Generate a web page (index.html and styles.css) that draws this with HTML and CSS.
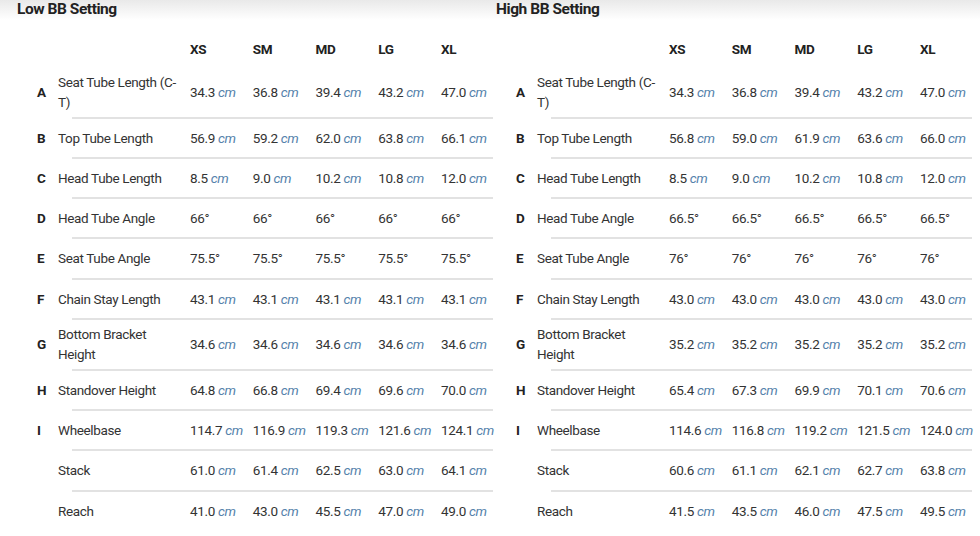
FILE: index.html
```html
<!DOCTYPE html>
<html>
<head>
<meta charset="utf-8">
<link rel="stylesheet" href="styles.css">
</head>
<body>
<div class="page">
  <section class="setting">
    <h2 class="title">Low BB Setting</h2>
    <div class="geo">
      <div class="row head"><span class="key"></span><span class="label"></span><span class="v">XS</span><span class="v">SM</span><span class="v">MD</span><span class="v">LG</span><span class="v">XL</span></div>
      <div class="row double"><span class="key">A</span><span class="label">Seat Tube Length (C-T)</span><span class="v">34.3 <i>cm</i></span><span class="v">36.8 <i>cm</i></span><span class="v">39.4 <i>cm</i></span><span class="v">43.2 <i>cm</i></span><span class="v">47.0 <i>cm</i></span></div>
      <div class="sep"></div>
      <div class="row"><span class="key">B</span><span class="label">Top Tube Length</span><span class="v">56.9 <i>cm</i></span><span class="v">59.2 <i>cm</i></span><span class="v">62.0 <i>cm</i></span><span class="v">63.8 <i>cm</i></span><span class="v">66.1 <i>cm</i></span></div>
      <div class="sep"></div>
      <div class="row"><span class="key">C</span><span class="label">Head Tube Length</span><span class="v">8.5 <i>cm</i></span><span class="v">9.0 <i>cm</i></span><span class="v">10.2 <i>cm</i></span><span class="v">10.8 <i>cm</i></span><span class="v">12.0 <i>cm</i></span></div>
      <div class="sep"></div>
      <div class="row"><span class="key">D</span><span class="label">Head Tube Angle</span><span class="v">66°</span><span class="v">66°</span><span class="v">66°</span><span class="v">66°</span><span class="v">66°</span></div>
      <div class="sep"></div>
      <div class="row"><span class="key">E</span><span class="label">Seat Tube Angle</span><span class="v">75.5°</span><span class="v">75.5°</span><span class="v">75.5°</span><span class="v">75.5°</span><span class="v">75.5°</span></div>
      <div class="sep"></div>
      <div class="row"><span class="key">F</span><span class="label">Chain Stay Length</span><span class="v">43.1 <i>cm</i></span><span class="v">43.1 <i>cm</i></span><span class="v">43.1 <i>cm</i></span><span class="v">43.1 <i>cm</i></span><span class="v">43.1 <i>cm</i></span></div>
      <div class="sep"></div>
      <div class="row double"><span class="key">G</span><span class="label">Bottom Bracket Height</span><span class="v">34.6 <i>cm</i></span><span class="v">34.6 <i>cm</i></span><span class="v">34.6 <i>cm</i></span><span class="v">34.6 <i>cm</i></span><span class="v">34.6 <i>cm</i></span></div>
      <div class="sep"></div>
      <div class="row"><span class="key">H</span><span class="label">Standover Height</span><span class="v">64.8 <i>cm</i></span><span class="v">66.8 <i>cm</i></span><span class="v">69.4 <i>cm</i></span><span class="v">69.6 <i>cm</i></span><span class="v">70.0 <i>cm</i></span></div>
      <div class="sep"></div>
      <div class="row"><span class="key">I</span><span class="label">Wheelbase</span><span class="v">114.7 <i>cm</i></span><span class="v">116.9 <i>cm</i></span><span class="v">119.3 <i>cm</i></span><span class="v">121.6 <i>cm</i></span><span class="v">124.1 <i>cm</i></span></div>
      <div class="sep"></div>
      <div class="row"><span class="key"></span><span class="label">Stack</span><span class="v">61.0 <i>cm</i></span><span class="v">61.4 <i>cm</i></span><span class="v">62.5 <i>cm</i></span><span class="v">63.0 <i>cm</i></span><span class="v">64.1 <i>cm</i></span></div>
      <div class="sep"></div>
      <div class="row"><span class="key"></span><span class="label">Reach</span><span class="v">41.0 <i>cm</i></span><span class="v">43.0 <i>cm</i></span><span class="v">45.5 <i>cm</i></span><span class="v">47.0 <i>cm</i></span><span class="v">49.0 <i>cm</i></span></div>
    </div>
  </section>
  <section class="setting">
    <h2 class="title">High BB Setting</h2>
    <div class="geo">
      <div class="row head"><span class="key"></span><span class="label"></span><span class="v">XS</span><span class="v">SM</span><span class="v">MD</span><span class="v">LG</span><span class="v">XL</span></div>
      <div class="row double"><span class="key">A</span><span class="label">Seat Tube Length (C-T)</span><span class="v">34.3 <i>cm</i></span><span class="v">36.8 <i>cm</i></span><span class="v">39.4 <i>cm</i></span><span class="v">43.2 <i>cm</i></span><span class="v">47.0 <i>cm</i></span></div>
      <div class="sep"></div>
      <div class="row"><span class="key">B</span><span class="label">Top Tube Length</span><span class="v">56.8 <i>cm</i></span><span class="v">59.0 <i>cm</i></span><span class="v">61.9 <i>cm</i></span><span class="v">63.6 <i>cm</i></span><span class="v">66.0 <i>cm</i></span></div>
      <div class="sep"></div>
      <div class="row"><span class="key">C</span><span class="label">Head Tube Length</span><span class="v">8.5 <i>cm</i></span><span class="v">9.0 <i>cm</i></span><span class="v">10.2 <i>cm</i></span><span class="v">10.8 <i>cm</i></span><span class="v">12.0 <i>cm</i></span></div>
      <div class="sep"></div>
      <div class="row"><span class="key">D</span><span class="label">Head Tube Angle</span><span class="v">66.5°</span><span class="v">66.5°</span><span class="v">66.5°</span><span class="v">66.5°</span><span class="v">66.5°</span></div>
      <div class="sep"></div>
      <div class="row"><span class="key">E</span><span class="label">Seat Tube Angle</span><span class="v">76°</span><span class="v">76°</span><span class="v">76°</span><span class="v">76°</span><span class="v">76°</span></div>
      <div class="sep"></div>
      <div class="row"><span class="key">F</span><span class="label">Chain Stay Length</span><span class="v">43.0 <i>cm</i></span><span class="v">43.0 <i>cm</i></span><span class="v">43.0 <i>cm</i></span><span class="v">43.0 <i>cm</i></span><span class="v">43.0 <i>cm</i></span></div>
      <div class="sep"></div>
      <div class="row double"><span class="key">G</span><span class="label">Bottom Bracket Height</span><span class="v">35.2 <i>cm</i></span><span class="v">35.2 <i>cm</i></span><span class="v">35.2 <i>cm</i></span><span class="v">35.2 <i>cm</i></span><span class="v">35.2 <i>cm</i></span></div>
      <div class="sep"></div>
      <div class="row"><span class="key">H</span><span class="label">Standover Height</span><span class="v">65.4 <i>cm</i></span><span class="v">67.3 <i>cm</i></span><span class="v">69.9 <i>cm</i></span><span class="v">70.1 <i>cm</i></span><span class="v">70.6 <i>cm</i></span></div>
      <div class="sep"></div>
      <div class="row"><span class="key">I</span><span class="label">Wheelbase</span><span class="v">114.6 <i>cm</i></span><span class="v">116.8 <i>cm</i></span><span class="v">119.2 <i>cm</i></span><span class="v">121.5 <i>cm</i></span><span class="v">124.0 <i>cm</i></span></div>
      <div class="sep"></div>
      <div class="row"><span class="key"></span><span class="label">Stack</span><span class="v">60.6 <i>cm</i></span><span class="v">61.1 <i>cm</i></span><span class="v">62.1 <i>cm</i></span><span class="v">62.7 <i>cm</i></span><span class="v">63.8 <i>cm</i></span></div>
      <div class="sep"></div>
      <div class="row"><span class="key"></span><span class="label">Reach</span><span class="v">41.5 <i>cm</i></span><span class="v">43.5 <i>cm</i></span><span class="v">46.0 <i>cm</i></span><span class="v">47.5 <i>cm</i></span><span class="v">49.5 <i>cm</i></span></div>
    </div>
  </section>
</div>
</body>
</html>
```
FILE: styles.css
```css
html, body {
  margin: 0;
  padding: 0;
}
body {
  background: linear-gradient(#e9e9e9 0, #ffffff 20px) no-repeat, #ffffff;
  font-family: Roboto, "Liberation Sans", sans-serif;
  color: #333333;
  width: 980px;
  height: 536px;
  overflow: hidden;
}
.page {
  display: flex;
  padding-left: 17px;
}
.setting {
  width: 479px;
  flex: none;
}
.title {
  margin: 0;
  font-size: 15.5px;
  line-height: 18px;
  font-weight: 700;
  letter-spacing: -0.45px;
  color: #222222;
}
.geo {
  margin-top: 12.5px;
}
.row {
  display: grid;
  grid-template-columns: 41px 132px repeat(5, 62.75px);
  align-items: center;
  min-height: 38.25px;
  font-size: 13.5px;
  letter-spacing: -0.35px;
  line-height: 20px;
}
.row.double {
  min-height: 49px;
}
.row.head {
  min-height: 37px;
}
.key {
  padding-left: 20px;
  font-weight: 700;
  color: #222222;
}
.label {
  padding-right: 10px;
}
.head .v {
  font-weight: 700;
  color: #222222;
}
.v {
  white-space: nowrap;
}
.v i {
  color: #5582ab;
}
.sep {
  height: 2px;
  margin-left: 55px;
  width: 421px;
  background: #e2e2e2;
}
```
